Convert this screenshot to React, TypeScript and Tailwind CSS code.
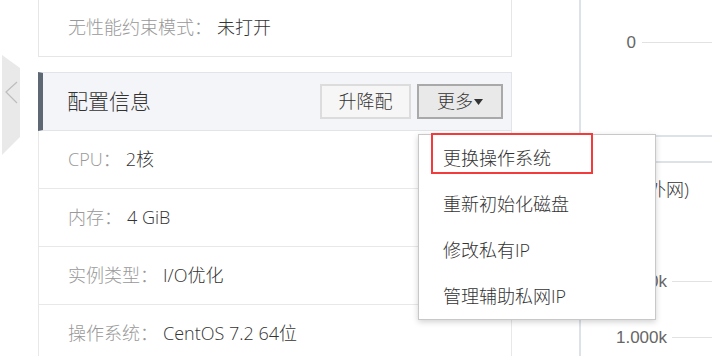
import React from "react";

const rows = [
  { label: "CPU：", value: "2核" },
  { label: "内存：", value: "4 GiB" },
  { label: "实例类型：", value: "I/O优化" },
  { label: "操作系统：", value: "CentOS 7.2 64位" },
];

const menuItems = ["更换操作系统", "重新初始化磁盘", "修改私有IP", "管理辅助私网IP"];

const SideTab: React.FC = () => (
  <div className="w-[38px] shrink-0 pt-[55px]">
    <svg width="20" height="100" viewBox="0 0 20 100" className="ml-[1px]">
      <polygon points="1,0 19,13 19,82 1,100" fill="#e9e9e9" />
      <polyline points="16,27 5,37 16,48" fill="none" stroke="#bdbdbd" strokeWidth="1.2" />
    </svg>
  </div>
);

const ChartRow: React.FC<{ label: string; labelW: string; gap: string; className?: string }> = ({
  label,
  labelW,
  gap,
  className,
}) => (
  <div className={`flex items-center h-[18px] ${className ?? ""}`}>
    <div className={`${labelW} text-right text-[17px] text-[#666] font-['Liberation_Sans',sans-serif] font-normal leading-none`}>
      {label}
    </div>
    <div className={`${gap} flex-1 h-px bg-[#e2e2e2]`} />
  </div>
);

export default function App() {
  return (
    <div className="relative w-[712px] h-[356px] overflow-hidden bg-white font-['Open_Sans','Noto_Sans_CJK_SC',sans-serif] font-light text-[18px] text-[#333]">
      <div className="flex">
        <SideTab />

        {/* left column */}
        <div className="w-[474px] shrink-0">
          <div className="h-[57px] border-x border-b border-[#e6e6e6] flex items-center pl-[29px] pb-[2px]">
            <span className="text-[#999]">无性能约束模式：</span>
            <span className="ml-[5px]">未打开</span>
          </div>

          <div className="mt-[15px] h-[59px] bg-[#f3f5f8] border-y border-r border-[#e1e4e9] border-l-[5px] border-l-[#5d6874] flex items-center pl-[24px] pr-[8px]">
            <span className="text-[21px] text-[#333] flex-1">配置信息</span>
            <button className="w-[91px] h-[35px] border-2 border-[#dcdcdc] bg-[#f6f6f6] text-[18px] text-[#333] flex items-center justify-center">
              升降配
            </button>
            <button className="ml-[6px] w-[86px] h-[35px] border-2 border-[#a9a9a9] bg-[#e9e9e9] text-[18px] text-[#333] flex items-center justify-center">
              更多
              <svg width="9" height="6" viewBox="0 0 9 6" className="ml-[1px]">
                <polygon points="0,0 9,0 4.5,6" fill="#333" />
              </svg>
            </button>
          </div>

          {rows.map((r) => (
            <div
              key={r.label}
              className="h-[58px] border-x border-b border-[#e8e8e8] flex items-center pl-[29px]"
            >
              <span className="text-[#999]">{r.label}</span>
              <span className="ml-[5px]">{r.value}</span>
            </div>
          ))}
        </div>

        {/* right column */}
        <div className="ml-[67px] flex-1">
          <div className="h-[137px] border-l-2 border-b-2 border-[#dde2e9] pt-[33px]">
            <ChartRow label="0" labelW="w-[55px]" gap="ml-[6px]" />
          </div>
          <div className="mt-[24px] h-[300px] border-l-2 border-t-2 border-[#dde2e9]">
            <div className="h-[52px] flex items-center pl-[26px] whitespace-nowrap">带宽(外网)</div>
            <ChartRow label="2.000k" labelW="w-[86px]" gap="ml-[5px]" className="mt-[57px]" />
            <ChartRow label="1.000k" labelW="w-[86px]" gap="ml-[5px]" className="mt-[38px]" />
          </div>
        </div>
      </div>

      {/* dropdown menu */}
      <div className="absolute left-[418px] top-[134px] w-[238px] bg-white border border-[#c8c8c8] shadow-[0_2px_6px_rgba(0,0,0,0.18)]">
        {menuItems.map((m) => (
          <div key={m} className="h-[46px] flex items-center pl-[24px] text-[18px] text-[#333]">
            {m}
          </div>
        ))}
      </div>
      <div className="absolute left-[431px] top-[133px] w-[162px] h-[41px] border-2 border-[#f43b3b]" />
    </div>
  );
}
